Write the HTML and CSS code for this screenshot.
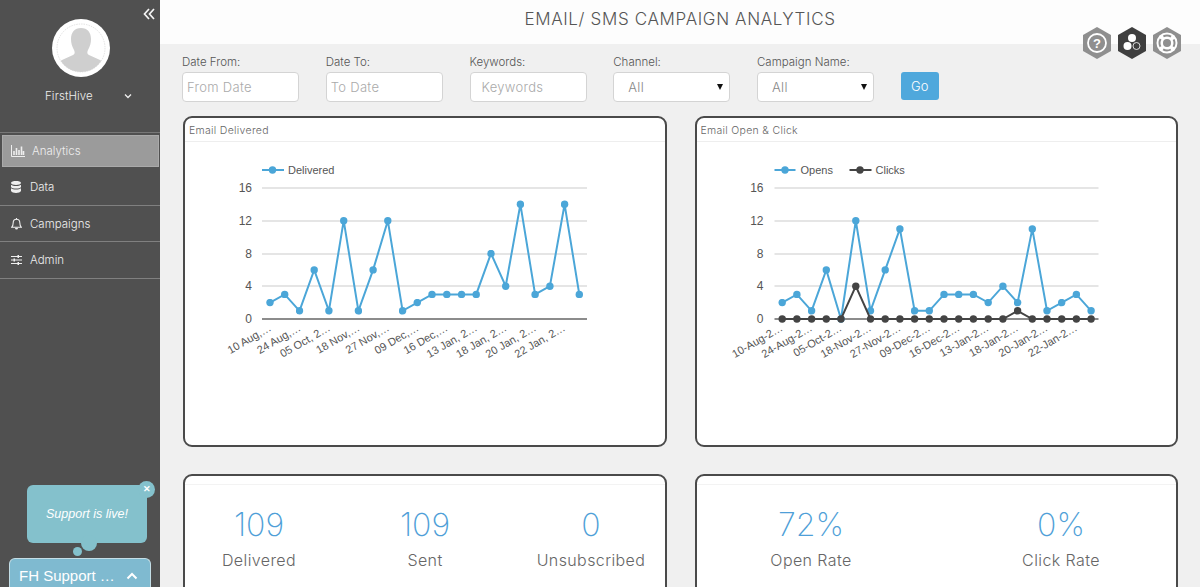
FILE: index.html
```html
<!DOCTYPE html>
<html lang="en">
<head>
<meta charset="utf-8">
<title>Email/ SMS Campaign Analytics</title>
<link rel="stylesheet" href="styles.css">
</head>
<body>
<div class="app">
  <aside class="sidebar">
    <div class="collapse-row">
      <svg class="collapse" width="12" height="12" viewBox="0 0 12 12"><path d="M6 1 1.500 6 6 11M11 1 6.500 6 11 11"/></svg>
    </div>
    <div class="avatar">
      <svg width="58" height="58" viewBox="0 0 58 58">
        <circle cx="29" cy="29" r="29" fill="#fff"/>
        <clipPath id="av"><circle cx="29" cy="29" r="24"/></clipPath>
        <path clip-path="url(#av)" fill="#cfcfcf" d="M29 9c6.500 0 10 4.500 10 11 0 4-1 7.500-3 11-1 2-1 4 1 5l11 5c2 1 4 4 4 7v10H6V48c0-3 2-6 4-7l11-5c2-1 2-3 1-5-2-3.500-3-7-3-11 0-6.500 3.500-11 10-11z"/>
        <circle cx="29" cy="29" r="24" fill="none" stroke="#cfcfcf" stroke-width=".6" stroke-dasharray="1.500 1"/>
      </svg>
    </div>
    <div class="user">
      <span class="user-name">FirstHive</span>
      <svg class="user-chev" width="8" height="6" viewBox="0 0 8 6"><path d="M1 1.500 4 4.500 7 1.500"/></svg>
    </div>
    <nav class="nav">
      <a class="nav-item nav-active">
        <svg class="nav-ico ico-a" width="14" height="12" viewBox="0 0 14 12"><path d="M.5 0v11.500H14" fill="none" stroke="#eee" stroke-width="1"/><path d="M3 10V6M5.500 10V3M8 10V5M10.500 10V1.500M12.500 10V6" fill="none" stroke="#eee" stroke-width="1.600"/></svg>
        <span>Analytics</span>
      </a>
      <a class="nav-item">
        <svg class="nav-ico ico-d" width="10" height="12" viewBox="0 0 10 12"><path fill="#eee" d="M0 2c0-2.600 10-2.600 10 0s-10 2.600-10 0zM0 3.800c2 1.600 8 1.600 10 0V6c-1 2-9 2-10 0zM0 7.300c2 1.600 8 1.600 10 0V10c-1 2.600-9 2.600-10 0z"/></svg>
        <span>Data</span>
      </a>
      <a class="nav-item">
        <svg class="nav-ico ico-c" width="11" height="12" viewBox="0 0 11 12"><path fill="none" stroke="#eee" stroke-width="1.100" d="M5.500 1.200c-2 0-3.300 1.500-3.300 3.500 0 2.500-.8 3.800-1.600 4.600h9.800c-.8-.8-1.600-2.100-1.600-4.600 0-2-1.300-3.500-3.300-3.500z"/><path fill="#eee" d="M4 10h3a1.500 1.500 0 0 1-3 0zM5 0h1v1.500H5z"/></svg>
        <span>Campaigns</span>
      </a>
      <a class="nav-item">
        <svg class="nav-ico ico-m" width="11" height="10" viewBox="0 0 11 10"><path d="M0 1.500h11M0 5h11M0 8.500h11" stroke="#eee" stroke-width="1.100"/><path d="M6.500 0h1.500v3H6.500zM2.500 3.500H4v3H2.500zM6.500 7h1.500v3H6.500z" fill="#eee"/></svg>
        <span>Admin</span>
      </a>
    </nav>
  </aside>

  <main class="main">
    <header class="topbar">
      <h1 class="title">EMAIL/ SMS CAMPAIGN ANALYTICS</h1>
    </header>

    <div class="hexes">
      <svg width="28" height="32" viewBox="0 0 28 32"><path fill="#8f8f8f" d="M14 0 28 8v16L14 32 0 24V8z"/><circle cx="14" cy="16" r="9" fill="none" stroke="#fff" stroke-width="1.800"/><text class="hex-q" x="14" y="20.500" text-anchor="middle">?</text></svg>
      <svg width="28" height="32" viewBox="0 0 28 32"><path fill="#3f3f3f" d="M14 0 28 8v16L14 32 0 24V8z"/><circle cx="14" cy="11" r="4" fill="#fff"/><circle cx="9.500" cy="19" r="4" fill="#fff"/><circle cx="18.500" cy="19" r="3.500" fill="none" stroke="#fff" stroke-width=".8"/></svg>
      <svg width="28" height="32" viewBox="0 0 28 32"><path fill="#8f8f8f" d="M14 0 28 8v16L14 32 0 24V8z"/><circle cx="14" cy="16" r="10.500" fill="#fff"/><circle cx="14" cy="16" r="7.500" fill="none" stroke="#8f8f8f" stroke-width="2" stroke-dasharray="8 3.780" stroke-dashoffset="4"/><circle cx="14" cy="16" r="4" fill="#8f8f8f"/></svg>
    </div>

    <form class="filters">
      <label class="field"><span class="field-label">Date From:</span><input class="input input-date" placeholder="From Date"></label>
      <label class="field"><span class="field-label">Date To:</span><input class="input input-date" placeholder="To Date"></label>
      <label class="field"><span class="field-label">Keywords:</span><input class="input input-key" placeholder="Keywords"></label>
      <label class="field"><span class="field-label">Channel:</span><span class="select-wrap"><select class="input select"><option>All</option></select></span></label>
      <label class="field"><span class="field-label">Campaign Name:</span><span class="select-wrap"><select class="input select"><option>All</option></select></span></label>
      <button class="go" type="button">Go</button>
    </form>

    <section class="cards">
      <article class="card chart-card">
        <div class="card-title">Email Delivered</div>
        <svg class="chart" width="480" height="303" viewBox="185 142 480 303">
          <defs>
            <marker id="dot-b" viewBox="0 0 8 8" refX="4" refY="4" markerWidth="8" markerHeight="8" markerUnits="userSpaceOnUse"><circle cx="4" cy="4" r="3.700" fill="#4ba6d8"/></marker>
          </defs>
          <path class="grid" d="M262 188H587M262 221H587M262 254H587M262 286H587"/>
          <path class="axis" d="M262 319H587"/>
          <g class="ylab">
            <text x="252" y="192">16</text><text x="252" y="225">12</text><text x="252" y="258">8</text><text x="252" y="290">4</text><text x="252" y="323">0</text>
          </g>
          <path class="line-b" d="M262 170H284"/><circle cx="272.500" cy="170" r="3.700" fill="#4ba6d8"/>
          <text class="leg" x="288" y="174">Delivered</text>
          <polyline class="line-b" marker-start="url(#dot-b)" marker-mid="url(#dot-b)" marker-end="url(#dot-b)" points="270,302.600 284.700,294.400 299.500,310.800 314.200,269.900 328.900,310.800 343.700,220.700 358.400,310.800 373.100,269.900 387.800,220.700 402.600,310.800 417.300,302.600 432,294.400 446.800,294.400 461.500,294.400 476.200,294.400 491,253.500 505.700,286.200 520.400,204.300 535.100,294.400 549.900,286.200 564.600,204.300 579.300,294.400"/>
          <g class="xlab">
            <text transform="rotate(-30 272 330)" x="272" y="330">10 Aug,…</text>
            <text transform="rotate(-30 301.500 330)" x="301.500" y="330">24 Aug,…</text>
            <text transform="rotate(-30 331 330)" x="331" y="330">05 Oct, 2…</text>
            <text transform="rotate(-30 360.500 330)" x="360.500" y="330">18 Nov,…</text>
            <text transform="rotate(-30 390 330)" x="390" y="330">27 Nov,…</text>
            <text transform="rotate(-30 419.500 330)" x="419.500" y="330">09 Dec,…</text>
            <text transform="rotate(-30 448.500 330)" x="448.500" y="330">16 Dec,…</text>
            <text transform="rotate(-30 478 330)" x="478" y="330">13 Jan, 2…</text>
            <text transform="rotate(-30 507.500 330)" x="507.500" y="330">18 Jan, 2…</text>
            <text transform="rotate(-30 537 330)" x="537" y="330">20 Jan, 2…</text>
            <text transform="rotate(-30 566 330)" x="566" y="330">22 Jan, 2…</text>
          </g>
        </svg>
      </article>

      <article class="card chart-card">
        <div class="card-title">Email Open &amp; Click</div>
        <svg class="chart" width="479" height="303" viewBox="696.500 142 479 303">
          <defs>
            <marker id="dot-c" viewBox="0 0 8 8" refX="4" refY="4" markerWidth="8" markerHeight="8" markerUnits="userSpaceOnUse"><circle cx="4" cy="4" r="3.700" fill="#4ba6d8"/></marker>
            <marker id="dot-k" viewBox="0 0 8 8" refX="4" refY="4" markerWidth="8" markerHeight="8" markerUnits="userSpaceOnUse"><circle cx="4" cy="4" r="3.700" fill="#444"/></marker>
          </defs>
          <path class="grid" d="M774 188H1098M774 221H1098M774 254H1098M774 286H1098"/>
          <path class="axis" d="M774 319H1098"/>
          <g class="ylab">
            <text x="763" y="192">16</text><text x="763" y="225">12</text><text x="763" y="258">8</text><text x="763" y="290">4</text><text x="763" y="323">0</text>
          </g>
          <path class="line-b" d="M774 170H795"/><circle cx="784.500" cy="170" r="3.700" fill="#4ba6d8"/>
          <text class="leg" x="800" y="174">Opens</text>
          <path class="line-k" d="M849 170H871"/><circle cx="859.500" cy="170" r="3.700" fill="#444"/>
          <text class="leg" x="875" y="174">Clicks</text>
          <polyline class="line-b" marker-start="url(#dot-c)" marker-mid="url(#dot-c)" marker-end="url(#dot-c)" points="781.700,302.600 796.400,294.400 811.100,310.800 825.800,269.900 840.500,319 855.300,220.700 870,310.800 884.700,269.900 899.400,228.900 914.100,310.800 928.800,310.800 943.500,294.400 958.200,294.400 972.900,294.400 987.700,302.600 1002.400,286.200 1017.100,302.600 1031.800,228.900 1046.500,310.800 1061.200,302.600 1075.900,294.400 1090.600,310.800"/>
          <polyline class="line-k" marker-start="url(#dot-k)" marker-mid="url(#dot-k)" marker-end="url(#dot-k)" points="781.700,319 796.400,319 811.100,319 825.800,319 840.500,319 855.300,286.200 870,319 884.700,319 899.400,319 914.100,319 928.800,319 943.500,319 958.200,319 972.900,319 987.700,319 1002.400,319 1017.100,310.800 1031.800,319 1046.500,319 1061.200,319 1075.900,319 1090.600,319"/>
          <g class="xlab">
            <text transform="rotate(-30 783 330)" x="783" y="330">10-Aug-2…</text>
            <text transform="rotate(-30 812.500 330)" x="812.500" y="330">24-Aug-2…</text>
            <text transform="rotate(-30 842 330)" x="842" y="330">05-Oct-2…</text>
            <text transform="rotate(-30 871.500 330)" x="871.500" y="330">18-Nov-2…</text>
            <text transform="rotate(-30 901 330)" x="901" y="330">27-Nov-2…</text>
            <text transform="rotate(-30 930.500 330)" x="930.500" y="330">09-Dec-2…</text>
            <text transform="rotate(-30 960 330)" x="960" y="330">16-Dec-2…</text>
            <text transform="rotate(-30 989 330)" x="989" y="330">13-Jan-2…</text>
            <text transform="rotate(-30 1018.500 330)" x="1018.500" y="330">18-Jan-2…</text>
            <text transform="rotate(-30 1048 330)" x="1048" y="330">20-Jan-2…</text>
            <text transform="rotate(-30 1077.500 330)" x="1077.500" y="330">22-Jan-2…</text>
          </g>
        </svg>
      </article>

      <article class="card stat-card">
        <div class="stat-head"></div>
        <div class="stats stats-3">
          <div class="stat"><div class="stat-num">109</div><div class="stat-label">Delivered</div></div>
          <div class="stat"><div class="stat-num">109</div><div class="stat-label">Sent</div></div>
          <div class="stat"><div class="stat-num">0</div><div class="stat-label">Unsubscribed</div></div>
        </div>
      </article>

      <article class="card stat-card">
        <div class="stat-head"></div>
        <div class="stats stats-2">
          <div class="stat"><div class="stat-num">72%</div><div class="stat-label">Open Rate</div></div>
          <div class="stat"><div class="stat-num">0%</div><div class="stat-label">Click Rate</div></div>
        </div>
      </article>
    </section>
  </main>
</div>

<div class="support">
  <div class="bubble">
    <em>Support is live!</em>
    <span class="bubble-close">✕</span>
    <span class="bubble-bump"></span>
    <span class="bubble-dot"></span>
  </div>
  <div class="support-bar">
    <span class="support-name">FH Support …</span>
    <svg width="12" height="8" viewBox="0 0 12 8"><path d="M1.500 6.500 6 2l4.500 4.500" fill="none" stroke="#fff" stroke-width="2"/></svg>
  </div>
</div>
</body>
</html>
```
FILE: styles.css
```css
* { box-sizing: border-box; }
html, body { margin: 0; height: 587px; overflow: hidden; }
body { font-family: Inter, "Open Sans", sans-serif; font-weight: 300; color: #555; background: #f0f0f0; }

.app { display: flex; height: 587px; }

.sidebar { flex: 0 0 160px; background: #505050; color: #eee; }
.collapse-row { display: flex; justify-content: flex-end; padding: 8px 5px 0 0; height: 19px; }
.collapse { fill: none; stroke: #f4f4f4; stroke-width: 1.700; }
.avatar { display: flex; justify-content: center; padding: 0 0 0 1px; height: 68px; }
.user { display: flex; align-items: center; height: 18px; padding-left: 45px; font-size: 11.500px; font-weight: 300; letter-spacing: .1px; }
.user-name { width: 79px; }
.user-chev { fill: none; stroke: #eee; stroke-width: 1.300; }
.nav { margin-top: 27px; border-top: 1px solid #777; display: flex; flex-direction: column; }
.nav-item { height: 36.500px; display: flex; align-items: center; font-size: 11.500px; font-weight: 300; border-bottom: 1px solid #808080; padding: 1px 0 0 11px; }
.nav-active { background: #9b9b9b; margin: 2px 1px 2px 2px; height: 32px; border: 1px solid #aaa; padding: 0 0 1px 8px; position: relative; box-shadow: 0 2px 0 #505050; }
.nav-ico { flex: none; }
.ico-a { margin-right: 7px; }
.ico-d { margin-right: 9px; }
.ico-c { margin-right: 8px; }
.ico-m { margin-right: 8px; }

.main { flex: 1; min-width: 0; position: relative; }
.topbar { height: 44px; background: #fdfdfd; display: flex; justify-content: center; align-items: center; }
.title { margin: 0 0 6px; font-size: 17px; font-weight: 300; letter-spacing: .65px; color: #555; }
.hexes { position: absolute; top: 27px; right: 19px; display: flex; gap: 7px; }
.hex-q { font: 700 13px "Liberation Sans", sans-serif; fill: #fff; }

.filters { display: flex; align-items: flex-start; gap: 26.750px; padding: 11px 0 0 22px; height: 72px; }
.field { width: 117px; display: flex; flex-direction: column; font-size: 11.500px; color: #555; font-weight: 300; }
.field-label { height: 17px; line-height: 14px; }
.input { width: 117px; height: 30px; border: 1px solid #d4d4d4; border-radius: 4px; background: #fff; font: 300 13px Inter, sans-serif; color: #888; letter-spacing: .3px; }
.input::placeholder { color: #aaa; }
.input-date { padding: 0 4px; }
.input-key { padding: 0 11px; }
.select { padding: 0 0 0 14px; appearance: none; display: block; }
.select-wrap { position: relative; display: block; }
.select-wrap::after { content: ""; position: absolute; right: 7px; top: 12px; border: 4px solid transparent; border-top: 6px solid #111; border-bottom: 0; border-left-width: 3px; border-right-width: 3px; }
.go { margin: 17px 0 0 0; width: 38px; height: 28px; border: 0; border-radius: 3px; background: #4fa8dc; color: #fff; font: 300 13px Inter, sans-serif; }

.cards { display: grid; grid-template-columns: 484px 483px; column-gap: 27.500px; row-gap: 27px; padding-left: 23px; }
.card { background: #fff; border: 2px solid #4a4a4a; border-radius: 9px; overflow: hidden; }
.chart-card { height: 331px; }
.card-title { height: 24px; border-bottom: 1px solid #eee; font-size: 10.500px; color: #666; padding: 6px 0 0 4px; letter-spacing: .3px; }
.chart { display: block; }
.grid { stroke: #ddd; stroke-width: 1.500; fill: none; }
.axis { stroke: #666; stroke-width: 1.500; fill: none; }
.line-b { stroke: #4ba6d8; stroke-width: 2; fill: none; }
.line-k { stroke: #444; stroke-width: 2; fill: none; }
.ylab text { font: 12px "Liberation Sans", sans-serif; fill: #555; text-anchor: end; }
.leg { font: 11px "Liberation Sans", sans-serif; fill: #555; }
.xlab text { font: 11px "Liberation Sans", sans-serif; fill: #555; text-anchor: end; }

.stat-card { height: 140px; }
.stat-head { height: 9px; border-bottom: 1px solid #f3f3f3; }
.stats { display: grid; justify-content: center; padding-top: 22px; }
.stats-3 { grid-template-columns: repeat(3, 140px); column-gap: 26px; }
.stats-2 { grid-template-columns: repeat(2, 200px); column-gap: 50px; }
.stat { text-align: center; }
.stat-num { font-size: 32px; line-height: 36px; font-weight: 200; color: #4f9fd8; }
.stat-label { font-size: 16px; line-height: 20px; margin-top: 7px; color: #666; letter-spacing: .4px; }

.support { position: absolute; left: 0; top: 0; font-family: "Liberation Sans", sans-serif; }
.bubble { position: absolute; left: 27px; top: 485px; width: 120px; height: 58px; background: #84c1cc; border-radius: 6px; display: flex; align-items: center; justify-content: center; color: #fff; font-size: 12.500px; font-weight: 400; }
.bubble-close { position: absolute; left: 111px; top: -4px; width: 17px; height: 17px; border-radius: 50%; background: #84c1cc; color: #fff; font-size: 9px; font-weight: 700; text-align: center; line-height: 17px; }
.bubble-bump { position: absolute; left: 54px; top: 50px; width: 16px; height: 16px; border-radius: 50%; background: #84c1cc; }
.bubble-dot { position: absolute; left: 46px; top: 62px; width: 9px; height: 9px; border-radius: 50%; background: #84c1cc; }
.support-bar { position: absolute; left: 9px; top: 558px; width: 142px; height: 29px; background: #7fbad0; border: 1px solid #c4dee6; border-bottom: 0; border-radius: 6px 6px 0 0; display: flex; align-items: center; padding: 5px 0 0 9px; color: #fff; font-size: 15px; font-weight: 400; }
.support-name { width: 107px; white-space: nowrap; }
```
